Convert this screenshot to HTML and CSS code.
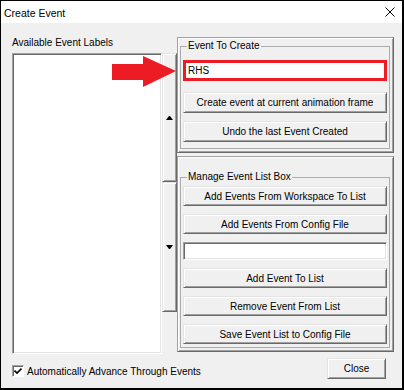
FILE: index.html
```html
<!DOCTYPE html>
<html>
<head>
    <meta charset="utf-8">
    <title>Create Event</title>
    <link rel="stylesheet" href="styles.css">
</head>
<body>
    <div class="window">
        <div class="titlebar">
            <span class="title">Create Event</span>
            <svg class="close-x" width="10" height="10" viewBox="0 0 10 10">
                <path d="M0.5 0.5 L9.5 9.5 M9.5 0.5 L0.5 9.5" stroke="#000" stroke-width="1" fill="none"/>
            </svg>
        </div>

        <div class="client">
            <div class="main">
                <div class="left-col">
                    <div class="label">Available Event Labels</div>
                    <div class="list-row">
                        <div class="listbox"></div>
                        <div class="mover">
                            <div class="mover-btn raised"><span class="tri-up"></span></div>
                            <div class="mover-btn raised"><span class="tri-down"></span></div>
                        </div>
                    </div>
                </div>

                <div class="right-col">
                    <div class="panel panel-create">
                        <fieldset class="group">
                            <legend>Event To Create</legend>
                            <div class="textbox highlighted">RHS</div>
                            <button class="btn raised btn-create">Create event at current animation frame</button>
                            <button class="btn raised">Undo the last Event Created</button>
                        </fieldset>
                    </div>

                    <div class="panel panel-manage">
                        <fieldset class="group">
                            <legend>Manage Event List Box</legend>
                            <button class="btn raised">Add Events From Workspace To List</button>
                            <button class="btn raised">Add Events From Config File</button>
                            <div class="textbox sunken"></div>
                            <button class="btn raised">Add Event To List</button>
                            <button class="btn raised">Remove Event From List</button>
                            <button class="btn raised">Save Event List to Config File</button>
                        </fieldset>
                    </div>
                </div>
            </div>

            <div class="footer">
                <label class="check-label">
                    <span class="checkbox">
                        <svg width="8" height="8" viewBox="0 0 8 8">
                            <path d="M0.5 3.5 L3 6 L7.5 1.5" stroke="#000" stroke-width="1.6" fill="none"/>
                        </svg>
                    </span>
                    Automatically Advance Through Events
                </label>
                <button class="btn raised btn-close">Close</button>
            </div>
        </div>

        <!-- red pointer drawn over the dialog -->
        <svg class="arrow" width="66" height="33" viewBox="0 0 66 33">
            <polygon points="1,9 32,9 32,1 65,16 32,32 32,25 1,25" fill="#ed1c24"/>
        </svg>
    </div>
</body>
</html>
```

FILE: styles.css
```css
body{
    margin: 0;
    background: #fff;
    font-family: "Liberation Sans", Arial, sans-serif;
    font-size: 10px;
    color: #000;}

.window{
    width: 404px;
    height: 390px;
    box-sizing: border-box;
    border: 1px solid #000;
    border-right-width: 2px;
    border-bottom-width: 2px;
    background: #f0f0f0;
    display: flex;
    flex-direction: column;
    position: relative;}

.titlebar{
    height: 22px;
    background: #fff;
    display: flex;
    align-items: center;
    padding-left: 3px;}

.title{
    flex: 1;
    font-size: 10.5px;
    padding-top: 1px;}

.close-x{
    margin-right: 7px;}

.client{
    flex: 1;
    display: flex;
    flex-direction: column;
    padding: 14px 8px 0 11px;}

.main{
    display: flex;
    height: 317px;}

/* left side: list + move buttons */
.left-col{
    width: 165px;
    display: flex;
    flex-direction: column;}

.label{
    height: 16px;
    line-height: 11px;}

.list-row{
    display: flex;
    align-items: flex-start;}

.listbox{
    width: 150px;
    height: 301px;
    box-sizing: border-box;
    background: #fff;
    border: 1px solid;
    border-color: #a0a0a0 #fff #fff #a0a0a0;
    box-shadow: inset 1px 1px #696969, inset -1px -1px #e3e3e3;}

.mover{
    width: 15px;
    display: flex;
    flex-direction: column;}

.mover-btn{
    box-sizing: border-box;
    height: 129px;
    display: flex;
    align-items: center;
    justify-content: center;}

.mover-btn + .mover-btn{
    height: 130px;}

.tri-up,
.tri-down{
    width: 1px;
    height: 0;
    border-left: 3px solid transparent;
    border-right: 3px solid transparent;}

.tri-up{
    border-bottom: 4px solid #000;}

.tri-down{
    border-top: 4px solid #000;}

.raised{
    background: #f0f0f0;
    border: 1px solid;
    border-color: #e3e3e3 #696969 #696969 #e3e3e3;
    box-shadow: inset 1px 1px #fff, inset -1px -1px #a0a0a0;}

.sunken{
    background: #fff;
    border: 1px solid;
    border-color: #a0a0a0 #fff #fff #a0a0a0;
    box-shadow: inset 1px 1px #696969, inset -1px -1px #e3e3e3;}

/* right side panels */
.right-col{
    width: 217px;
    display: flex;
    flex-direction: column;
    gap: 3px;}

.panel{
    box-sizing: border-box;
    border: 1px solid;
    border-color: #a0a0a0 #696969 #696969 #a0a0a0;
    box-shadow: inset 1px 1px #fff, inset -1px -1px #a0a0a0;
    padding: 2px 3px 0 2px;}

.panel-create{
    height: 116px;}

.panel-manage{
    height: 196px;
    padding-top: 14px;}

.group{
    margin: 0;
    min-width: 0;
    border: 1px solid #acacac;
    padding: 8px 2px 6px 2px;}

.panel-manage .group{
    padding: 3px 2px 3px 2px;}

.group legend{
    padding: 0 1px;
    margin-left: 4px;
    line-height: 12px;}

.btn{
    display: block;
    box-sizing: border-box;
    width: 100%;
    height: 20px;
    padding: 0;
    font: inherit;
    color: #000;
    margin-top: 8px;}

.panel-create .btn{
    height: 21px;}

.panel-create .btn-create{
    margin-top: 11px;}

.panel-manage .btn:first-of-type{
    margin-top: 0;}

.textbox{
    box-sizing: border-box;
    height: 18px;
    margin-top: 8px;}

.highlighted{
    height: 21px;
    margin-top: 0;
    background: #fff;
    border: 3px solid #ed1c24;
    padding-left: 2px;
    line-height: 15px;}

.footer{
    display: flex;
    align-items: flex-start;}

.check-label{
    display: flex;
    align-items: center;
    gap: 3px;
    margin-top: 11px;}

.checkbox{
    width: 12px;
    height: 12px;
    box-sizing: border-box;
    background: #fff;
    border: 1px solid;
    border-color: #a0a0a0 #fff #fff #a0a0a0;
    box-shadow: inset 1px 1px #696969;
    display: flex;
    align-items: center;
    justify-content: center;}

.btn-close{
    width: 59px;
    height: 21px;
    margin: 4px 8px 0 auto;}

.arrow{
    position: absolute;
    left: 110px;
    top: 54px;}
```
